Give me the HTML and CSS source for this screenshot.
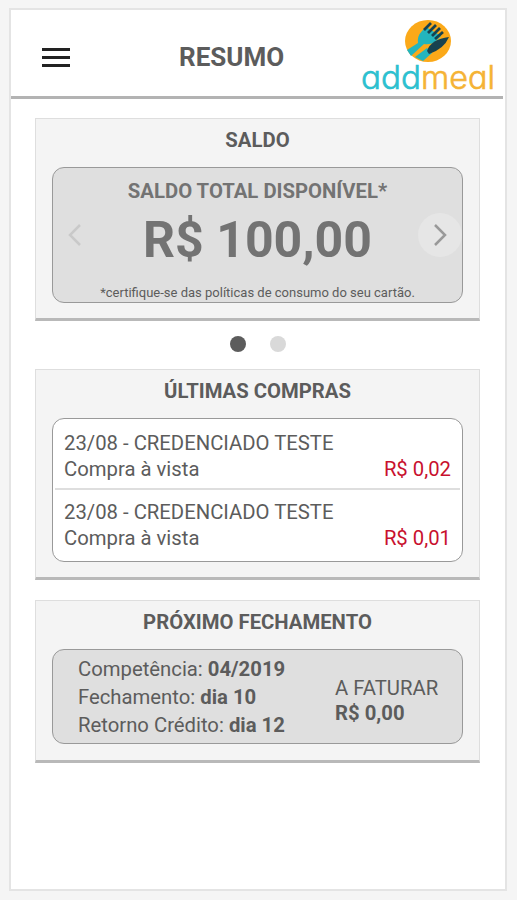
FILE: index.html
```
<!DOCTYPE html>
<html lang="pt-BR">
  <head>
    <meta charset="UTF-8" />
    <meta name="viewport" content="width=device-width, initial-scale=1.0" />
    <title>Resumo</title>
    <link rel="stylesheet" href="styles.css">
  </head>
  <body>
    <div class="app">
      <header class="header">
        <button class="menu" aria-label="Menu">
          <span></span>
          <span></span>
          <span></span>
        </button>
        <h1>RESUMO</h1>
        <svg class="logo" viewBox="0 0 142 85" width="142" height="85">
          <ellipse cx="70" cy="27" rx="23" ry="21" fill="#fba919" />
          <!-- garfo -->
          <path d="M49 36 L60 29 Q59 22 64 17 L68 13 L83 22 L78 27 Q73 31 66 30 L53 42 Z" fill="#23b5bd" />
          <path d="M66 16 L73 9 M70 19 L78 11 M74 22 L82 14 M77 25 L85 18" stroke="#17424f" stroke-width="2.8" />
          <!-- faca -->
          <path d="M57 43 L69 34 L74 39 L65 47 Z" fill="#23b5bd" />
          <path d="M69 37 Q73 25 91 23 Q86 35 71 40 Z" fill="#17424f" />
          <text class="logo-text" y="75"><tspan class="add" x="3" textLength="60" lengthAdjust="spacingAndGlyphs">add</tspan><tspan class="meal" x="63" textLength="74" lengthAdjust="spacingAndGlyphs">meal</tspan></text>
        </svg>
      </header>

      <main class="content">
        <section class="card saldo">
          <h2>SALDO</h2>
          <div class="panel gray">
            <span class="arrow left">
              <svg viewBox="0 0 14 22" width="14" height="22"><path d="M12 1 L2 11 L12 21" /></svg>
            </span>
            <div class="saldo-info">
              <h3>SALDO TOTAL DISPONÍVEL*</h3>
              <strong class="valor">R$ 100,00</strong>
              <small>*certifique-se das políticas de consumo do seu cartão.</small>
            </div>
            <span class="arrow right">
              <svg viewBox="0 0 14 22" width="14" height="22"><path d="M2 1 L12 11 L2 21" /></svg>
            </span>
          </div>
        </section>

        <ul class="points">
          <li class="now"></li>
          <li></li>
        </ul>

        <section class="card compras">
          <h2>ÚLTIMAS COMPRAS</h2>
          <ul class="panel">
            <li>
              <p>23/08 - CREDENCIADO TESTE</p>
              <p class="linha"><span>Compra à vista</span><span class="preco">R$ 0,02</span></p>
            </li>
            <li>
              <p>23/08 - CREDENCIADO TESTE</p>
              <p class="linha"><span>Compra à vista</span><span class="preco">R$ 0,01</span></p>
            </li>
          </ul>
        </section>

        <section class="card fechamento">
          <h2>PRÓXIMO FECHAMENTO</h2>
          <div class="panel gray">
            <div class="datas">
              <p>Competência: <b>04/2019</b></p>
              <p>Fechamento: <b>dia 10</b></p>
              <p>Retorno Crédito: <b>dia 12</b></p>
            </div>
            <div class="faturar">
              <p>A FATURAR</p>
              <p><b>R$ 0,00</b></p>
            </div>
          </div>
        </section>
      </main>
    </div>
  </body>
</html>
```
FILE: styles.css
```
* {
  margin: 0;
  padding: 0;
  list-style: none;
  box-sizing: border-box;
}
body {
  background-color: #f5f5f5;
  font-family: Roboto, "Liberation Sans", sans-serif;
  font-size: 20.3px;
  color: #5c5c5c;
}
.app {
  width: 498px;
  height: 883px;
  margin: 8px 0 0 9px;
  border: 2px solid #e4e4e4;
  background-color: #fff;
  display: flow-root;
}

.header {
  display: flex;
  align-items: flex-start;
  height: 89px;
  margin-right: 2px;
  border-bottom: 3px solid #b3b3b3;
}
.menu {
  display: flex;
  flex-direction: column;
  gap: 5px;
  width: 28px;
  margin: 38px 0 0 31px;
  border: 0;
  background: none;
}
.menu span {
  height: 3px;
  background-color: #222;
}
.header h1 {
  width: 106px;
  margin: 32px 0 0 109px;
  font-size: 26px;
  line-height: 30px;
  white-space: nowrap;
}
.logo {
  margin: 4px 0 0 73px;
  flex: none;
}
.logo-text {
  font-family: Inter, Lato, sans-serif;
  font-size: 32px;
  font-weight: 300;
  font-feature-settings: "cv11";
  stroke-width: .6px;
}
.add {
  fill: #2cc0cf;
  stroke: #2cc0cf;
}
.meal {
  fill: #f5b335;
  stroke: #f5b335;
}

.content {
  padding: 19px 25px 0 24px;
}
.card {
  padding: 0 16px;
  border: 1px solid #dedede;
  border-bottom: 3px solid #b9b9b9;
  background-color: #f4f4f4;
}
.card h2 {
  padding-top: 8px;
  height: 48px;
  font-size: 20.3px;
  line-height: 26px;
  text-align: center;
}
.panel {
  border: 1px solid #999;
  border-radius: 12px;
  background-color: #fff;
}
.panel.gray {
  background-color: #dfdfdf;
}

.saldo {
  height: 203px;
}
.saldo .panel {
  display: flex;
  align-items: center;
  justify-content: space-between;
  height: 136px;
}
.saldo-info {
  display: flex;
  flex-direction: column;
  align-items: center;
  padding-top: 9px;
  white-space: nowrap;
  color: #737373;
}
.saldo-info h3 {
  font-size: 20.3px;
  line-height: 26px;
}
.valor {
  font-size: 50px;
  line-height: 58px;
  margin: 7px 0 16px;
}
.saldo-info small {
  font-size: 13px;
  line-height: 16px;
  color: #5c5c5c;
}
.arrow {
  display: flex;
  align-items: center;
  justify-content: center;
  width: 44px;
  height: 44px;
  border-radius: 50%;
}
.arrow path {
  fill: none;
  stroke: #999;
  stroke-width: 2.5;
}
.arrow.left path {
  stroke: #c9c9c9;
}
.arrow.right {
  background-color: #e6e6e6;
}

.points {
  display: flex;
  justify-content: center;
  gap: 24px;
  padding: 15px 0 17px;
}
.points li {
  width: 16px;
  height: 16px;
  border-radius: 50%;
  background-color: #d9d9d9;
}
.points li.now {
  background-color: #5c5c5c;
}

.compras {
  height: 211px;
  margin-bottom: 20px;
}
.compras .panel {
  height: 144px;
}
.compras li {
  height: 69px;
  margin: 0 2px;
  padding: 11px 9px 0;
  line-height: 26px;
}
.compras li + li {
  border-top: 2px solid #dedede;
  padding-top: 9px;
}
.linha {
  display: flex;
  justify-content: space-between;
}
.preco {
  color: #c8102e;
}

.fechamento {
  height: 163px;
}
.fechamento .panel {
  display: flex;
  align-items: center;
  height: 95px;
  padding-left: 25px;
}
.datas {
  width: 257px;
  line-height: 28px;
}
.faturar {
  line-height: 25px;
  padding-top: 9px;
}
```
